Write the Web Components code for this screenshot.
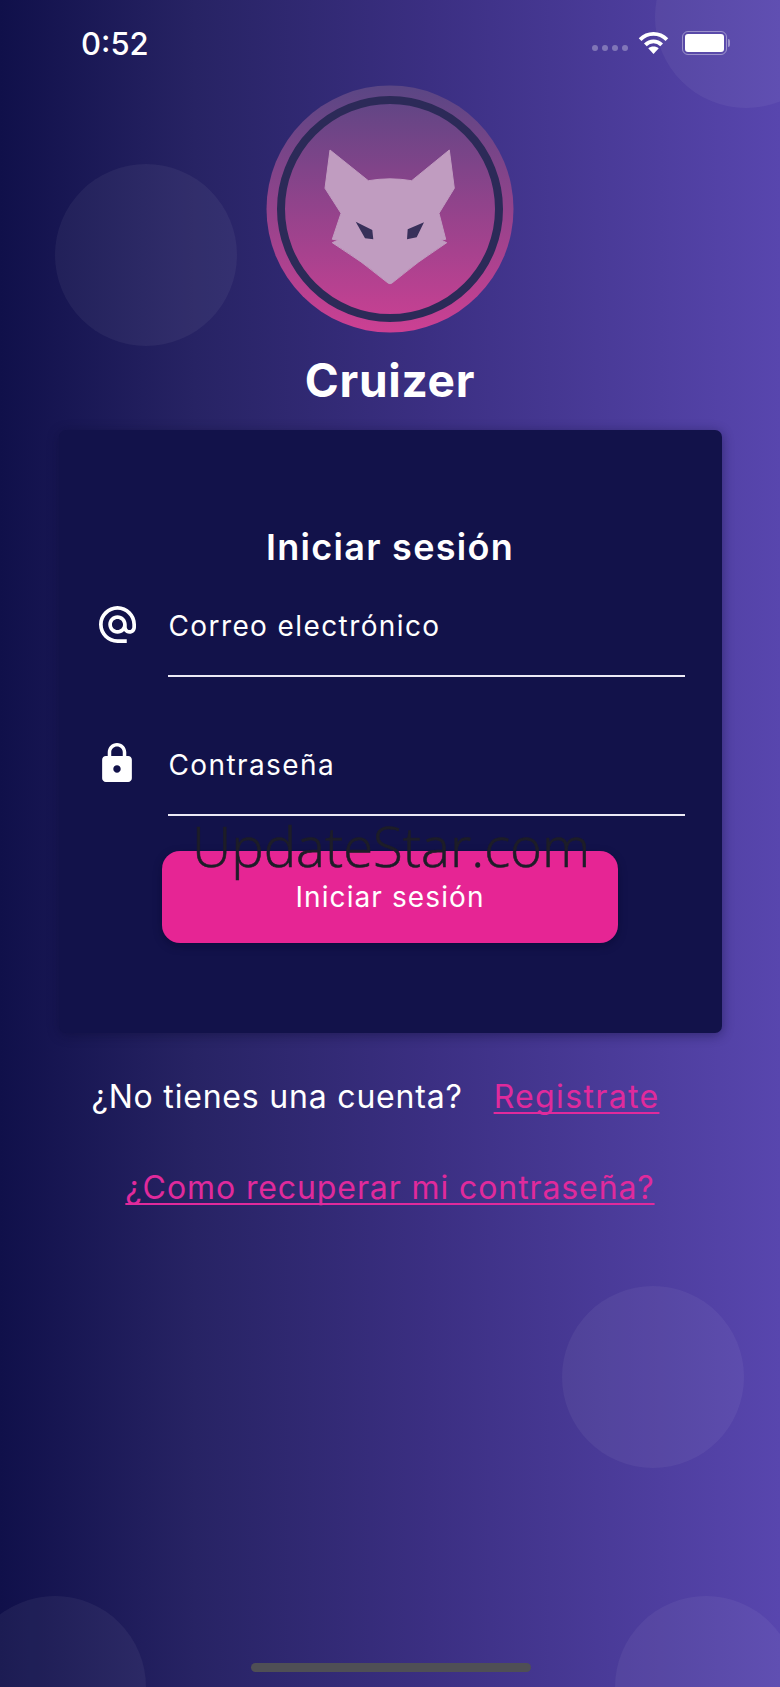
<!DOCTYPE html>
<html>
<head>
<meta charset="utf-8">
<title>Cruizer</title>
<style>
  html, body { margin: 0; padding: 0; }
  body { width: 780px; height: 1687px; overflow: hidden; font-family: Inter, "Liberation Sans", sans-serif; }
</style>
</head>
<body>
<login-screen>
  <status-bar></status-bar>
  <cruizer-logo></cruizer-logo>
  <login-card>
    <text-field label="Correo electrónico" icon="at"></text-field>
    <text-field label="Contraseña" icon="lock"></text-field>
  </login-card>
  <login-links></login-links>
</login-screen>

<script>
class LoginScreen extends HTMLElement {
  constructor() {
    super();
    this.attachShadow({ mode: 'open' }).innerHTML = `
      <style>
        :host {
          display: flex;
          flex-direction: column;
          align-items: center;
          position: relative;
          width: 780px;
          height: 1687px;
          overflow: hidden;
          background: linear-gradient(90deg, #10104a 0%, #272364 25%, #3b2f82 55%, #5846ae 100%);
          color: #fff;
        }
        .bubble {
          position: absolute;
          width: 182px;
          height: 182px;
          border-radius: 50%;
          background: rgba(255, 255, 255, 0.05);
        }
        .home {
          position: absolute;
          left: 251px;
          top: 1663px;
          width: 280px;
          height: 9px;
          border-radius: 5px;
          background: #4f4f55;
        }
        .watermark {
          position: absolute;
          left: 192px;
          top: 818px;
          font-size: 54.5px;
          font-weight: 300;
          line-height: 56px;
          color: #1d1d28;
          -webkit-text-stroke: .6px #1d1d28;
          white-space: nowrap;
          font-family: "Open Sans", sans-serif;
          z-index: 2;
        }
      </style>
      <span class="bubble" style="left:55px;top:164px"></span>
      <span class="bubble" style="left:655px;top:-74px"></span>
      <span class="bubble" style="left:562px;top:1286px"></span>
      <span class="bubble" style="left:-36px;top:1596px"></span>
      <span class="bubble" style="left:615px;top:1596px"></span>
      <slot></slot>
      <span class="watermark">UpdateStar.com</span>
      <span class="home"></span>
    `;
  }
}

class StatusBar extends HTMLElement {
  constructor() {
    super();
    this.attachShadow({ mode: 'open' }).innerHTML = `
      <style>
        :host {
          display: flex;
          align-items: center;
          justify-content: space-between;
          box-sizing: border-box;
          width: 780px;
          height: 85px;
          padding: 0 50px 0 81px;
        }
        .time { font-size: 31px; font-weight: 500; line-height: 34px; margin-top: 3px; }
        .icons { display: flex; align-items: center; margin-top: 1px; }
        .dots { display: flex; gap: 4px; margin: 9px 10px 0 0; }
        .dots i { width: 6px; height: 6px; border-radius: 50%; background: rgba(255,255,255,.3); }
        .battery {
          box-sizing: border-box;
          width: 45px;
          height: 24px;
          margin-left: 13px;
          padding: 2px;
          border: 1.5px solid rgba(255,255,255,.4);
          border-radius: 6px;
        }
        .battery b { display: block; height: 100%; background: #fff; border-radius: 3px; }
        .cap { width: 2px; height: 8px; margin-left: 1px; background: rgba(255,255,255,.4); border-radius: 0 2px 2px 0; }
      </style>
      <span class="time">0:52</span>
      <span class="icons">
        <span class="dots"><i></i><i></i><i></i><i></i></span>
        <svg width="31" height="23" viewBox="0 0 32 24" fill="none" stroke="#fff" stroke-width="4">
          <path d="M2 8 C10 0 22 0 30 8"/>
          <path d="M7.5 13.5 C12.5 8.5 19.5 8.5 24.5 13.5"/>
          <path d="M16 23 L10.5 17 C13.5 14.5 18.5 14.5 21.5 17 Z" fill="#fff" stroke="none"/>
        </svg>
        <span class="battery"><b></b></span>
        <span class="cap"></span>
      </span>
    `;
  }
}

class CruizerLogo extends HTMLElement {
  constructor() {
    super();
    this.attachShadow({ mode: 'open' }).innerHTML = `
      <style>
        :host { display: flex; flex-direction: column; align-items: center; }
        svg { display: block; }
        h1 {
          margin: 18px 0 0;
          font-size: 46px;
          line-height: 58px;
          font-weight: 700;
          letter-spacing: .7px;
        }
      </style>
      <svg width="248" height="248" viewBox="0 0 248 248">
        <defs>
          <linearGradient id="disc" x1="0" y1="0" x2="0" y2="1">
            <stop offset="0" stop-color="#5a4684"/>
            <stop offset="1" stop-color="#cc4093"/>
          </linearGradient>
        </defs>
        <circle cx="124" cy="124" r="123.5" fill="url(#disc)"/>
        <circle cx="124" cy="124" r="109" fill="none" stroke="#2c2a58" stroke-width="8"/>
        <path fill="#c09cc0" stroke="#c09cc0" stroke-width="1" stroke-linejoin="round" d="M64 65 L102.3 95.7 Q124 92 145.7 95.7 L183.3 65 L188.3 103.3 L173 128.3 L179.7 154.3 L175 155 L180.7 157.7 Q152 176 126 198 Q124 199.5 122 198 Q96 176 66.3 157.7 L72.3 155 L66.3 154.3 L75 128.3 L59 103.3 Z"/>
        <path fill="#38305a" d="M89.7 136.7 L106.3 145 L107.3 154.3 L99 153.3 Z M158 137.3 L141.7 144.3 L141 154.3 L150.7 152.3 Z"/>
      </svg>
      <h1>Cruizer</h1>
    `;
  }
}

class LoginCard extends HTMLElement {
  constructor() {
    super();
    this.attachShadow({ mode: 'open' }).innerHTML = `
      <style>
        :host {
          display: flex;
          flex-direction: column;
          align-items: center;
          box-sizing: border-box;
          width: 663px;
          height: 603px;
          margin-top: 21px;
          padding: 97px 37px 0 40px;
          background: #12124a;
          border-radius: 7px;
          box-shadow: 0 2px 12px rgba(10, 10, 50, .45);
        }
        h2 {
          margin: 0 0 0 -3px;
          font-size: 36px;
          line-height: 40px;
          font-weight: 600;
          letter-spacing: 1.3px;
        }
        .fields { align-self: stretch; display: flex; flex-direction: column; gap: 68px; margin-top: 39px; }
        button {
          width: 456px;
          height: 92px;
          margin: 35px 0 0 -3px;
          border: 0;
          border-radius: 18px;
          background: #e62594;
          color: #fff;
          font: 400 28px Inter, "Liberation Sans", sans-serif;
          letter-spacing: 1.1px;
          box-shadow: 0 3px 8px rgba(5, 5, 40, .4);
        }
      </style>
      <h2>Iniciar sesión</h2>
      <div class="fields"><slot></slot></div>
      <button>Iniciar sesión</button>
    `;
  }
}

const FIELD_ICONS = {
  at: '<svg width="37" height="37" viewBox="2 2 20 20" fill="#fff"><path d="M12 2C6.48 2 2 6.48 2 12s4.48 10 10 10h5v-2h-5c-4.34 0-8-3.66-8-8s3.66-8 8-8 8 3.66 8 8v1.43c0 .79-.71 1.57-1.5 1.57s-1.5-.78-1.5-1.57V12c0-2.76-2.24-5-5-5s-5 2.24-5 5 2.24 5 5 5c1.38 0 2.64-.56 3.54-1.47.65.89 1.77 1.47 2.96 1.47 1.97 0 3.5-1.6 3.5-3.57V12c0-5.52-4.48-10-10-10zm0 13c-1.66 0-3-1.34-3-3s1.34-3 3-3 3 1.34 3 3-1.34 3-3 3z"/></svg>',
  lock: '<svg width="30" height="39" viewBox="4 1 16 21" fill="#fff" style="margin:-2px 2px 0 0"><path d="M18 8h-1V6c0-2.76-2.24-5-5-5S7 3.24 7 6v2H6c-1.1 0-2 .9-2 2v10c0 1.1.9 2 2 2h12c1.1 0 2-.9 2-2V10c0-1.1-.9-2-2-2zm-6 9c-1.1 0-2-.9-2-2s.9-2 2-2 2 .9 2 2-.9 2-2 2zm3.1-9H8.9V6c0-1.71 1.39-3.1 3.1-3.1 1.71 0 3.1 1.39 3.1 3.1v2z"/></svg>'
};

class TextField extends HTMLElement {
  constructor() {
    super();
    this.attachShadow({ mode: 'open' });
  }

  connectedCallback() {
    const icon = FIELD_ICONS[this.getAttribute('icon')] || '';
    this.shadowRoot.innerHTML = `
      <style>
        :host { display: flex; align-items: flex-start; height: 71px; }
        .icon { width: 38px; display: flex; justify-content: center; margin-right: 31px; }
        .box { flex: 1; height: 71px; box-sizing: border-box; border-bottom: 2px solid #eceaf6; padding-left: 1px; }
        .label { font-size: 28px; line-height: 40px; letter-spacing: 1.4px; font-weight: 400; }
      </style>
      <span class="icon">${icon}</span>
      <span class="box"><span class="label">${this.getAttribute('label')}</span></span>
    `;
  }
}

class LoginLinks extends HTMLElement {
  constructor() {
    super();
    this.attachShadow({ mode: 'open' }).innerHTML = `
      <style>
        :host {
          display: flex;
          flex-direction: column;
          align-items: center;
          gap: 57px;
          margin-top: 47px;
          font-size: 32px;
          line-height: 34px;
          letter-spacing: .9px;
        }
        .row { display: flex; gap: 31px; margin-right: 29px; }
        .row span { letter-spacing: .8px; }
        .row a { letter-spacing: 1.35px; }
        a {
          color: #e02a9c;
          text-decoration: underline;
          text-decoration-thickness: 2px;
          text-decoration-skip-ink: none;
          text-underline-offset: 4px;
        }
      </style>
      <div class="row"><span>¿No tienes una cuenta?</span><a>Registrate</a></div>
      <a>¿Como recuperar mi contraseña?</a>
    `;
  }
}

customElements.define('login-screen', LoginScreen);
customElements.define('status-bar', StatusBar);
customElements.define('cruizer-logo', CruizerLogo);
customElements.define('login-card', LoginCard);
customElements.define('text-field', TextField);
customElements.define('login-links', LoginLinks);
</script>
</body>
</html>
